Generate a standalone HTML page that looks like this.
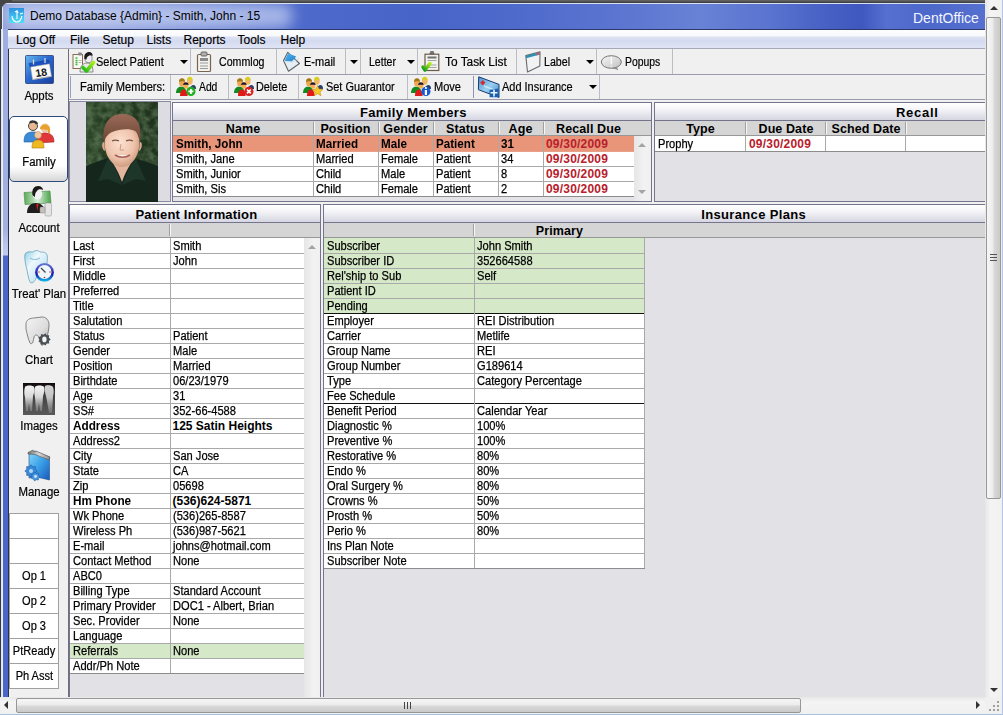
<!DOCTYPE html><html><head><meta charset="utf-8"><title>DentOffice</title><style>
*{box-sizing:border-box;margin:0;padding:0}
html,body{width:1003px;height:715px;overflow:hidden;background:#f0f0f0;font-family:"Liberation Sans",sans-serif;font-size:11px;color:#000;position:relative}
.a{position:absolute}
.t{position:absolute;white-space:nowrap;line-height:13px}
#topband{left:0;top:0;width:985px;height:3px;background:linear-gradient(#6a6a6a,#3a3a3a)}
#title{left:2px;top:3px;width:983px;height:27px;background:linear-gradient(90deg,#93a3dc 0%,#8e9fdc 10%,#6a82d4 22%,#4e6acb 30%,#4764c8 42%,#4e6acb 52%,#5a74d0 62%,#6882d6 71%,#5a74d0 78%,#4660c4 84%,#3e58c0 87.5%,#5670d0 90%,#4c68ca 94%,#5670d0 100%);border-radius:6px 0 0 0;overflow:hidden}
#title .hl{position:absolute;left:0;top:0;width:100%;height:1px;background:#d8e0f8}#title .hl2{position:absolute;left:0;top:0;width:1px;height:100%;background:#e4eafa}
#title .glow{position:absolute;left:6px;top:1px;width:285px;height:24px;border-radius:12px;background:rgba(220,228,250,.6);filter:blur(7px)}
#lframe{left:0;top:29px;width:9px;height:668px;background:linear-gradient(90deg,#3a3a3a 0,#3a3a3a 1.5px,#dde4f8 1.5px,#dde4f8 2.5px,transparent 2.5px,transparent 8px,#2a3050 8px,#2a3050 9px,#f0f0f0 9px)}#lframe .fill{position:absolute;left:2.5px;top:0;width:5.5px;height:100%;background:linear-gradient(#9eaee2 0,#a2b0e2 200px,#b8c4ec 215px,#c0cbee 226px,#4a66c8 227px,#4a66c8 100%)}
#menubar{left:8px;top:29px;width:977px;height:20px;background:linear-gradient(#fdfdfe 0%,#f8f9fc 34%,#dde2f2 38%,#d4daef 60%,#dfe3f5 100%);border-top:1px solid #2a3a6a;border-bottom:1px solid #a6a9b6}
#menubar span{position:absolute;top:3px;font-size:12px;line-height:14px;color:#000;white-space:nowrap;-webkit-text-stroke:.15px #000}
.tb{background:#f0f0f0;border-bottom:1px solid #9a9cae}
.sep{position:absolute;width:1px;background:#bcbcc6}
.tbt{position:absolute;font-size:12px;line-height:13px;white-space:nowrap;color:#000;transform:scaleX(.915);transform-origin:0 0;-webkit-text-stroke:.2px #000}
.s{transform:scaleX(.925);transform-origin:0 0;-webkit-text-stroke:.25px #000}
.dd{position:absolute;width:0;height:0;border-left:4px solid transparent;border-right:4px solid transparent;border-top:4px solid #000}
.panel{position:absolute;border:1px solid #76768e;background:#e2e2e6}
.ptitle{position:absolute;left:0;top:0;right:0;height:17px;background:linear-gradient(#fefefe 0%,#f0f0f4 40%,#d6d6e2 100%);border-bottom:1px solid #76768e;font-weight:bold;font-size:13px;line-height:17px;text-align:center;color:#111}
.hdr{position:absolute;background:#d6d6d6;border-bottom:1px solid #9a9a9a}
.hdr span{position:absolute;top:0;font-weight:bold;font-size:11.5px;line-height:14px;text-align:center;color:#111}
.hsep{position:absolute;top:3px;width:1px;height:11px;background:#a0a0a0;border-right:1px solid #f4f4f4}
.row{position:absolute;background:#fff;border-bottom:1px solid #a8a8a8}
.row span{position:absolute;top:1px;line-height:13px;font-size:11px;white-space:nowrap;color:#111}
.vline{position:absolute;width:1px;background:#a8a8a8}
.navl{position:absolute;font-size:12px;line-height:13px;white-space:nowrap;color:#000;text-align:center;transform:scaleX(.95);transform-origin:50% 0;-webkit-text-stroke:.2px #000}
.obox{position:absolute;left:9px;width:50px;height:26px;background:#fff;border:1px solid #a0a0a0;font-size:12px;line-height:24px;text-align:center;color:#111}.obox span{display:inline-block;transform:scaleX(.92);-webkit-text-stroke:.2px #000;color:#000}
.red{color:#c42b2b!important;font-weight:bold}
.b{font-weight:bold}
</style></head><body>
<div id="topband" class="a"></div>
<div class="a" style="left:0;top:0;width:12px;height:30px;background:#454545"></div>
<div id="title" class="a"><div class="glow"></div><div class="hl"></div><div class="hl2"></div></div>
<div id="lframe" class="a"><div class="fill"></div></div>
<svg class="a" style="left:9px;top:8px" width="16" height="16" viewBox="0 0 16 16"><defs><linearGradient id="ai" x1="0" y1="0" x2="0" y2="1"><stop offset="0" stop-color="#2a90e0"/><stop offset="1" stop-color="#50e0f8"/></linearGradient></defs><rect width="15" height="15" fill="url(#ai)"/><path d="M8 2v9M6 4c1-1 3-1 3 1M3 8c0 4 3 6 5 6s4-2 5-6M11 6l3-1" stroke="#fff" stroke-width="1.1" fill="none"/></svg>
<div class="t" style="left:30px;top:8.5px;font-size:12px;line-height:14px;color:#000">Demo Database {Admin} - Smith, John - 15</div>
<div class="t" style="left:913px;top:10px;font-size:14px;line-height:16px;color:#f4f6ff">DentOffice</div>
<div id="menubar" class="a">
<span style="left:8px">Log Off</span>
<span style="left:62px">File</span>
<span style="left:94.5px">Setup</span>
<span style="left:138.5px">Lists</span>
<span style="left:175.5px">Reports</span>
<span style="left:229.5px">Tools</span>
<span style="left:272.5px">Help</span>
</div>
<div class="a" style="left:68px;top:49px;width:1px;height:648px;background:#6e6e80"></div>
<div class="a tb" style="left:69px;top:49px;width:916px;height:26px"></div>
<div class="a tb" style="left:69px;top:75px;width:916px;height:25px"></div>
<div class="sep" style="left:190px;top:49px;height:25px"></div>
<div class="sep" style="left:276px;top:49px;height:25px"></div>
<div class="sep" style="left:345px;top:49px;height:25px"></div>
<div class="sep" style="left:360px;top:49px;height:25px"></div>
<div class="sep" style="left:417px;top:49px;height:25px"></div>
<div class="sep" style="left:516px;top:49px;height:25px"></div>
<div class="sep" style="left:596px;top:49px;height:25px"></div>
<div class="sep" style="left:672px;top:49px;height:25px"></div>
<div class="sep" style="left:170px;top:75px;height:24px"></div>
<div class="sep" style="left:228px;top:75px;height:24px"></div>
<div class="sep" style="left:298px;top:75px;height:24px"></div>
<div class="sep" style="left:407px;top:75px;height:24px"></div>
<div class="sep" style="left:599px;top:75px;height:24px"></div>
<div class="a" style="left:70px;top:76px;width:1px;height:22px;background:#9aa0c4"></div>
<div class="a" style="left:473px;top:76px;width:1px;height:22px;background:#8d93b4"></div>
<div class="tbt" style="left:96px;top:56px;transform:scaleX(0.915)">Select Patient</div>
<div class="tbt" style="left:218.5px;top:56px;transform:scaleX(0.885)">Commlog</div>
<div class="tbt" style="left:304.3px;top:56px;transform:scaleX(0.92)">E-mail</div>
<div class="tbt" style="left:368.5px;top:56px;transform:scaleX(0.88)">Letter</div>
<div class="tbt" style="left:444.6px;top:56px;transform:scaleX(0.99)">To Task List</div>
<div class="tbt" style="left:544.4px;top:56px;transform:scaleX(0.885)">Label</div>
<div class="tbt" style="left:624.8px;top:56px;transform:scaleX(0.865)">Popups</div>
<div class="tbt" style="left:79.5px;top:81px;transform:scaleX(0.926)">Family Members:</div>
<div class="tbt" style="left:199.2px;top:81px;transform:scaleX(0.86)">Add</div>
<div class="tbt" style="left:256.3px;top:81px;transform:scaleX(0.9)">Delete</div>
<div class="tbt" style="left:326.3px;top:81px;transform:scaleX(0.91)">Set Guarantor</div>
<div class="tbt" style="left:434px;top:81px;transform:scaleX(0.92)">Move</div>
<div class="tbt" style="left:502.4px;top:81px;transform:scaleX(0.913)">Add Insurance</div>
<div class="dd" style="left:179.5px;top:60px"></div>
<div class="dd" style="left:350px;top:60px"></div>
<div class="dd" style="left:407px;top:60px"></div>
<div class="dd" style="left:585.5px;top:60px"></div>
<div class="dd" style="left:588.5px;top:85px"></div>
<svg class="a" style="left:70px;top:48px" width="26" height="26" viewBox="0 0 26 26">
<defs><linearGradient id="spchk" x1="0" y1="1" x2="1" y2="0"><stop offset="0" stop-color="#18b818"/><stop offset="1" stop-color="#a8f010"/></linearGradient></defs>
<rect x="3" y="6.5" width="9.5" height="14" fill="#f8f8f4" stroke="#8a6a50" stroke-width="1"/><rect x="8" y="4.5" width="4" height="3" rx="1" fill="#888"/>
<path d="M5.5 10h2M5.5 12.5h2M5.5 14.5h2M5.5 16.5h2" stroke="#38c038" stroke-width="1.3"/><path d="M8.5 12.5h3M8.5 14.5h3" stroke="#aaa" stroke-width=".8"/>
<path d="M10 24c0-6 3-9 7-9s6 3 6 9z" fill="#e8e8ec" stroke="#777" stroke-width=".8"/>
<ellipse cx="18.5" cy="10.5" rx="3.6" ry="4.2" fill="#ececf0" stroke="#555" stroke-width=".6"/>
<path d="M14.5 11c-1-5 2-7 4.5-7s4 2 3.5 4c-1-1-3-1-4 0-1 .5-2 1.5-2 3.5z" fill="#1a1a1a"/>
<path d="M13 19.5l3.5 3.5 7-8.5" stroke="url(#spchk)" stroke-width="3.6" fill="none" stroke-linecap="round" stroke-linejoin="round"/>
</svg>
<svg class="a" style="left:196px;top:51px" width="18" height="22" viewBox="0 0 18 22">
<rect x="1.5" y="3.5" width="13" height="17" rx="1" fill="#f2f2ee" stroke="#7a6450" stroke-width="1.2"/><rect x="5" y="1" width="6" height="4" rx="1" fill="#b0b0b0" stroke="#666"/>
<rect x="4" y="7" width="8" height="3" fill="#8a8a8a"/><path d="M4 12h8M4 15h8M4 17.5h8" stroke="#999"/></svg>
<svg class="a" style="left:278px;top:49px" width="26" height="26" viewBox="0 0 26 26">
<defs><linearGradient id="emb" x1="0" y1="0" x2="1" y2="1"><stop offset="0" stop-color="#5ab8f0"/><stop offset="1" stop-color="#1a80d0"/></linearGradient></defs>
<path d="M9.8 3.3L21.5 14.5 10.5 22.2 5.5 11.6z" fill="#e4eef4" stroke="#606468" stroke-width="1.1" stroke-linejoin="round"/>
<path d="M10 4.2L18.2 7.6 13.8 12.4 6.6 11.8z" fill="url(#emb)"/>
<path d="M6.5 12.5l7.5 .5 7-3.5" stroke="#c8d8e4" stroke-width=".8" fill="none"/>
</svg>
<svg class="a" style="left:415px;top:49px" width="26" height="26" viewBox="0 0 26 26">
<defs><linearGradient id="tkchk" x1="0" y1="1" x2="1" y2="0"><stop offset="0" stop-color="#109818"/><stop offset="1" stop-color="#b0f010"/></linearGradient></defs>
<rect x="10" y="5.2" width="13.8" height="16.3" fill="#f2f2f0" stroke="#6a5a48" stroke-width="1.2"/><path d="M15 5l.5-2.5h3l.5 2.5z" fill="#777" stroke="#555" stroke-width=".6"/>
<rect x="12.5" y="7.5" width="9" height="2" fill="#707070"/><path d="M12.5 11.5h9M12.5 16h9M12.5 18.5h9" stroke="#9a9a9a" stroke-width=".9"/>
<path d="M8 18l2 3 5-6.5" stroke="url(#tkchk)" stroke-width="3.4" fill="none" stroke-linecap="round" stroke-linejoin="round"/>
</svg>
<svg class="a" style="left:518px;top:49px" width="26" height="26" viewBox="0 0 26 26">
<path d="M7.8 6.6L22 2.8 21.8 16.9 9.5 23z" fill="#f0f2f4" stroke="#6a6a6a" stroke-width="1.1" stroke-linejoin="round"/>
<path d="M8 6.7L22 2.9v2.6L8.1 9.3z" fill="#2a90b0"/><path d="M18.5 3.8L22 2.9v2.6l-3.5 1z" fill="#b06078"/>
</svg>
<svg class="a" style="left:596px;top:49px" width="26" height="26" viewBox="0 0 26 26">
<defs><linearGradient id="pug" x1="0" y1="0" x2="1" y2="1"><stop offset="0" stop-color="#f8f8f8"/><stop offset=".5" stop-color="#dcdcdc"/><stop offset="1" stop-color="#c0c0c0"/></linearGradient></defs>
<path d="M19 18l3 2.5-5-1.5z" fill="#bbb" stroke="#666" stroke-width=".6"/>
<ellipse cx="15.3" cy="13" rx="10" ry="6.3" fill="url(#pug)" stroke="#6a6a6a" stroke-width=".9"/>
<path d="M15.3 8v7.5M15.3 17v1" stroke="#fafafa" stroke-width="1.5"/>
</svg>
<svg class="a" style="left:172px;top:75px" width="26" height="25" viewBox="0 0 26 25">
<path d="M18 14c0-3 2-4 3.5-4s2.5 1 2.5 4z" fill="#28406a"/>
<ellipse cx="17.8" cy="6" rx="2.9" ry="3.8" fill="#f0b860"/><path d="M15 5.5c0-3 1.5-3.8 2.8-3.8s2.8 .8 2.8 3.8c-1-1-4-1-5.6 0z" fill="#d8d020"/>
<path d="M4 18c0-4 2-6.3 4.5-6.3h2c2.5 0 3.5 2 3.5 6.3z" fill="#138a20"/>
<ellipse cx="10" cy="7.5" rx="3" ry="4" fill="#f0a850"/><path d="M7 7c0-3 1.5-3.8 3-3.8s3 .8 3 3.8c-1-1-4.5-1-6 0z" fill="#a07818"/>
<path d="M8 21c0-4 1.5-6.5 3.8-6.5s3.8 2.5 3.8 6.5z" fill="#e01818"/>
<ellipse cx="13.9" cy="11" rx="2.5" ry="2.6" fill="#f4b050"/><path d="M11.2 10c0-2 1.2-2.8 2.7-2.8s2.7 .8 2.7 2.8c-1-.5-4.4-.5-5.4 0z" fill="#1a1830"/>
<circle cx="18.9" cy="16.4" r="4.6" fill="#20b020"/><path d="M16.4 16.4h5M18.9 13.9v5" stroke="#fff" stroke-width="1.8"/></svg>
<svg class="a" style="left:229.5px;top:75px" width="26" height="25" viewBox="0 0 26 25">
<path d="M18 14c0-3 2-4 3.5-4s2.5 1 2.5 4z" fill="#28406a"/>
<ellipse cx="17.8" cy="6" rx="2.9" ry="3.8" fill="#f0b860"/><path d="M15 5.5c0-3 1.5-3.8 2.8-3.8s2.8 .8 2.8 3.8c-1-1-4-1-5.6 0z" fill="#d8d020"/>
<path d="M4 18c0-4 2-6.3 4.5-6.3h2c2.5 0 3.5 2 3.5 6.3z" fill="#138a20"/>
<ellipse cx="10" cy="7.5" rx="3" ry="4" fill="#f0a850"/><path d="M7 7c0-3 1.5-3.8 3-3.8s3 .8 3 3.8c-1-1-4.5-1-6 0z" fill="#a07818"/>
<path d="M8 21c0-4 1.5-6.5 3.8-6.5s3.8 2.5 3.8 6.5z" fill="#e01818"/>
<ellipse cx="13.9" cy="11" rx="2.5" ry="2.6" fill="#f4b050"/><path d="M11.2 10c0-2 1.2-2.8 2.7-2.8s2.7 .8 2.7 2.8c-1-.5-4.4-.5-5.4 0z" fill="#1a1830"/>
<circle cx="18.9" cy="16.4" r="4.6" fill="#d82020"/><path d="M17 14.5l3.8 3.8M20.8 14.5l-3.8 3.8" stroke="#fff" stroke-width="1.7"/></svg>
<svg class="a" style="left:299px;top:75px" width="26" height="25" viewBox="0 0 26 25">
<path d="M18 14c0-3 2-4 3.5-4s2.5 1 2.5 4z" fill="#28406a"/>
<ellipse cx="17.8" cy="6" rx="2.9" ry="3.8" fill="#f0b860"/><path d="M15 5.5c0-3 1.5-3.8 2.8-3.8s2.8 .8 2.8 3.8c-1-1-4-1-5.6 0z" fill="#d8d020"/>
<path d="M4 18c0-4 2-6.3 4.5-6.3h2c2.5 0 3.5 2 3.5 6.3z" fill="#138a20"/>
<ellipse cx="10" cy="7.5" rx="3" ry="4" fill="#f0a850"/><path d="M7 7c0-3 1.5-3.8 3-3.8s3 .8 3 3.8c-1-1-4.5-1-6 0z" fill="#a07818"/>
<path d="M8 21c0-4 1.5-6.5 3.8-6.5s3.8 2.5 3.8 6.5z" fill="#e01818"/>
<ellipse cx="13.9" cy="11" rx="2.5" ry="2.6" fill="#f4b050"/><path d="M11.2 10c0-2 1.2-2.8 2.7-2.8s2.7 .8 2.7 2.8c-1-.5-4.4-.5-5.4 0z" fill="#1a1830"/>
<path d="M18.5 10.5l1.6 3.6 3.9.3-3 2.6 1 3.8-3.5-2.1-3.4 2.1 1-3.8-3-2.6 3.9-.3z" fill="#f8c828" stroke="#c08010" stroke-width=".5"/></svg>
<svg class="a" style="left:407px;top:75px" width="26" height="25" viewBox="0 0 26 25">
<path d="M18 14c0-3 2-4 3.5-4s2.5 1 2.5 4z" fill="#28406a"/>
<ellipse cx="17.8" cy="6" rx="2.9" ry="3.8" fill="#f0b860"/><path d="M15 5.5c0-3 1.5-3.8 2.8-3.8s2.8 .8 2.8 3.8c-1-1-4-1-5.6 0z" fill="#d8d020"/>
<path d="M4 18c0-4 2-6.3 4.5-6.3h2c2.5 0 3.5 2 3.5 6.3z" fill="#138a20"/>
<ellipse cx="10" cy="7.5" rx="3" ry="4" fill="#f0a850"/><path d="M7 7c0-3 1.5-3.8 3-3.8s3 .8 3 3.8c-1-1-4.5-1-6 0z" fill="#a07818"/>
<path d="M8 21c0-4 1.5-6.5 3.8-6.5s3.8 2.5 3.8 6.5z" fill="#e01818"/>
<ellipse cx="13.9" cy="11" rx="2.5" ry="2.6" fill="#f4b050"/><path d="M11.2 10c0-2 1.2-2.8 2.7-2.8s2.7 .8 2.7 2.8c-1-.5-4.4-.5-5.4 0z" fill="#1a1830"/>
<circle cx="18.9" cy="16.4" r="4.6" fill="#1a5ad0"/><path d="M18.9 15v5" stroke="#fff" stroke-width="2.2"/><circle cx="18.9" cy="13" r="1.1" fill="#fff"/></svg>
<svg class="a" style="left:470px;top:75px" width="32" height="25" viewBox="0 0 32 25">
<defs><linearGradient id="aig" x1="0" y1="0" x2="1" y2="1"><stop offset="0" stop-color="#4a90d0"/><stop offset=".5" stop-color="#9ad0f0"/><stop offset="1" stop-color="#3a80c8"/></linearGradient></defs>
<path d="M8.7 1.8L29 9.4V22.4L8.4 14.7z" fill="url(#aig)" stroke="#1a3a70" stroke-width="1" stroke-linejoin="round"/>
<path d="M10.5 7.7h4.5M12.7 5.5v4.5" stroke="#e02020" stroke-width="1.8"/>
<path d="M14 11l9 3.3" stroke="#c8e8f8" stroke-width="1.4"/>
<path d="M19.6 15l8.8-1.5v8.8h-8.8z" fill="#1a60b0"/><path d="M20.5 17.8h7M24 14.5v7" stroke="#e8f4ff" stroke-width="1.6"/>
</svg>
<div class="a" style="left:9px;top:116px;width:59px;height:66px;border:1px solid #2c4a7a;border-radius:5px;background:linear-gradient(#ffffff 0%,#ffffff 76%,#f4f4f4 84%,#d6d6d6 100%)"></div>
<svg class="a" style="left:25px;top:55px" width="29" height="29" viewBox="0 0 29 29">
<defs><linearGradient id="apg" x1="0" y1="0" x2="1" y2="1"><stop offset="0" stop-color="#68b8f0"/><stop offset=".45" stop-color="#2a6ad0"/><stop offset="1" stop-color="#1a3ea0"/></linearGradient></defs>
<rect x="0.5" y="0.5" width="28" height="28" rx="1" fill="url(#apg)" stroke="#28407a" stroke-width=".8"/>
<path d="M4 8.5l19.5-3.5 1.5 5-19.5 3.5z" fill="#1a50c0" stroke="#103890" stroke-width=".4"/>
<path d="M5.5 12l19-3.2 2 12.5-19 3.3z" fill="#fafafa" stroke="#909090" stroke-width=".5"/>
<path d="M7.5 24.6l19-3.3" stroke="#b8b8b8" stroke-width="1"/>
<text x="16" y="21.2" font-family="Liberation Sans" font-weight="bold" font-size="10.5" text-anchor="middle" transform="rotate(-9 16 17)" fill="#141414">18</text>
<path d="M8.5 4.5v5M20 3v5" stroke="#d8d8d8" stroke-width="1.3"/></svg>
<div class="navl" style="left:-1.5px;width:80px;top:90px">Appts</div>
<svg class="a" style="left:23px;top:120px" width="32" height="29" viewBox="0 0 32 29">
<circle cx="10" cy="6" r="4.5" fill="#e8b890" stroke="#444" stroke-width="1"/><path d="M7 3c1-2 6-2 7 1" stroke="#333" stroke-width="2.5" fill="none"/>
<path d="M1 22c0-8 3-10 9-10s7 2 7 6v4z" fill="#3a8ad8" stroke="#245a98" stroke-width=".6"/>
<circle cx="22" cy="8" r="4.5" fill="#f0c8a0"/><path d="M17 9c0-6 10-6 10 0v4h-2v-3" fill="#e8a030"/>
<path d="M14 23c0-8 3-10 8-10s9 2 9 9z" fill="#e03838" stroke="#a02020" stroke-width=".6"/>
<circle cx="15" cy="15" r="3.5" fill="#f0c8a0" stroke="#b08050" stroke-width=".5"/>
<path d="M9 28c0-6 2-8 6-8s6 2 6 8z" fill="#f0b820" stroke="#b08010" stroke-width=".6"/></svg>
<div class="navl" style="left:-1.5px;width:80px;top:156px">Family</div>
<svg class="a" style="left:23px;top:186px" width="30" height="31" viewBox="0 0 30 31">
<defs><linearGradient id="acn" x1="0" y1="0" x2="1" y2="0"><stop offset="0" stop-color="#58a858"/><stop offset=".5" stop-color="#d8f0d8"/><stop offset="1" stop-color="#48a048"/></linearGradient></defs>
<path d="M1 6.5l26-1.5 1 12-26 1.5z" fill="url(#acn)" stroke="#4a8a4a" stroke-width=".6"/>
<path d="M4 27c0-7 4-10 9-10s8 3 9 8l-1 2z" fill="#1e1e1e"/><path d="M13.2 18l1.2 7 1.2-7z" fill="#d02020"/>
<ellipse cx="14.5" cy="8" rx="4.6" ry="5.6" fill="#f2f2f2"/>
<path d="M9.5 9c-1-6 2-9 5.5-9 3 0 5 2 5 4-2-1-5-1-6 1-1 1-2 2-2 6-1-1-2-1-2.5-2z" fill="#1a1a1a"/>
<rect x="22" y="17" width="6.5" height="13" rx="1.5" fill="#e4e4e4" stroke="#999" stroke-width=".6"/>
<rect x="17" y="21" width="5" height="6" rx="1" fill="#c8c0b8" stroke="#888" stroke-width=".5"/></svg>
<div class="navl" style="left:-1.5px;width:80px;top:222px">Account</div>
<svg class="a" style="left:22px;top:250px" width="34" height="34" viewBox="0 0 34 34">
<defs><linearGradient id="tth" x1="0" y1="0" x2="1" y2="1"><stop offset="0" stop-color="#8cd0e8"/><stop offset=".35" stop-color="#eef8fc"/><stop offset=".7" stop-color="#c8e8f4"/><stop offset="1" stop-color="#9ac8d8"/></linearGradient>
<linearGradient id="clr" x1="0" y1="0" x2="0" y2="1"><stop offset="0" stop-color="#6a7ad8"/><stop offset=".6" stop-color="#1a1aa8"/><stop offset="1" stop-color="#10c8f0"/></linearGradient></defs>
<path d="M3 4c2-3 6-2 8-2 2-2 5-2 7 0 3 0 6 0 7 3 1 3 0 9-1 13-1 5-2 9-4 12-2 2-4-2-5-4-1 3-3 7-6 7-2-1-3-8-4-13-1-4-3-11-2-16z" fill="url(#tth)" stroke="#5a98b0" stroke-width=".7"/>
<path d="M8 8c3 2 6 2 10 0" stroke="#7ab8d0" stroke-width="1" fill="none"/>
<circle cx="22.5" cy="22.3" r="9.4" fill="url(#clr)"/><circle cx="22.5" cy="22" r="7" fill="#eef6fc"/>
<path d="M19 18l4.5 4.5" stroke="#444" stroke-width="1.2"/><circle cx="17" cy="22" r=".8" fill="#d04040"/><circle cx="28" cy="22" r=".8" fill="#d04040"/><circle cx="22.5" cy="27.5" r=".8" fill="#a03030"/></svg>
<div class="navl" style="left:-1.5px;width:80px;top:288px">Treat' Plan</div>
<svg class="a" style="left:24px;top:316px" width="28" height="32" viewBox="0 0 28 32">
<defs><linearGradient id="cth" x1="0" y1="0" x2="1" y2="1"><stop offset="0" stop-color="#f4f4f4"/><stop offset=".6" stop-color="#dcdcdc"/><stop offset="1" stop-color="#a8a8a8"/></linearGradient></defs>
<path d="M2 8c0-4 4-6 8-6 3 0 5-1 8-1 4 0 7 3 7 8 0 4-1 8-2 12l-4 8c-1 1-2 0-3-3-1-5-2-7-4-7s-2 3-3 7c-1 2-2 2-3 1-2-4-3-10-4-14z" fill="url(#cth)" stroke="#6a6a6a" stroke-width=".8"/>
<path d="M26.70,23.40 L24.91,25.04 L25.23,27.45 L22.80,27.56 L21.49,29.60 L19.57,28.13 L17.25,28.86 L16.72,26.49 L14.48,25.55 L15.60,23.40 L14.48,21.25 L16.72,20.31 L17.25,17.94 L19.57,18.67 L21.49,17.20 L22.80,19.24 L25.23,19.35 L24.91,21.76Z" fill="#4a5055"/><ellipse cx="20.4" cy="23.4" rx="2.2" ry="2.8" fill="#f4f4f4"/></svg>
<div class="navl" style="left:-1.5px;width:80px;top:354px">Chart</div>
<svg class="a" style="left:23px;top:383px" width="32" height="32" viewBox="0 0 32 32">
<defs><linearGradient id="xr" x1="0" y1="0" x2="0" y2="1"><stop offset="0" stop-color="#100808"/><stop offset=".35" stop-color="#404040"/><stop offset="1" stop-color="#5a5a5a"/></linearGradient>
<linearGradient id="xt" x1="0" y1="0" x2="0" y2="1"><stop offset="0" stop-color="#f4f4f4"/><stop offset=".45" stop-color="#d8d8d8"/><stop offset="1" stop-color="#8a8a8a" stop-opacity=".6"/></linearGradient></defs>
<rect width="32" height="32" fill="url(#xr)"/>
<path d="M2 4c1-2 8-2 9 0 1 3 0 6-1 9l-1 15h-2l-1-8-1 8h-2l-1-14c-1-3-1-7 0-10z" fill="url(#xt)"/>
<path d="M12 4c1-2 8-2 9 0 1 3 0 6-1 9l-1 15h-2l-1-8-1 8h-2l-1-14c-1-3-1-7 0-10z" fill="url(#xt)"/>
<path d="M22 3c1-1 7-1 8 1 1 3 1 6 0 9l-1 17h-3l-2-12-1-5c-1-3-2-7-1-10z" fill="url(#xt)" opacity=".85"/></svg>
<div class="navl" style="left:-1.5px;width:80px;top:420px">Images</div>
<svg class="a" style="left:23px;top:449px" width="32" height="33" viewBox="0 0 32 33">
<defs><linearGradient id="mg" x1="0" y1="0" x2="1" y2="1"><stop offset="0" stop-color="#8ad8fc"/><stop offset=".5" stop-color="#3aa0e8"/><stop offset="1" stop-color="#1a58b8"/></linearGradient>
<linearGradient id="mgl" x1="0" y1="0" x2="1" y2="0"><stop offset="0" stop-color="#707070"/><stop offset=".5" stop-color="#d8d8d8"/><stop offset="1" stop-color="#888"/></linearGradient></defs>
<path d="M6 4l6-2 1.5 1 13 5v23l-13-3-7.5 1z" fill="url(#mg)" stroke="#1a5090" stroke-width=".6"/>
<path d="M5 3.5l5-2.5 1 2 2-1 14 6-1 3-14-5.5-7-0.5z" fill="url(#mgl)" stroke="#555" stroke-width=".6"/>
<path d="M14.20,22.00 L12.25,23.76 L12.38,26.38 L9.76,26.25 L8.00,28.20 L6.24,26.25 L3.62,26.38 L3.75,23.76 L1.80,22.00 L3.75,20.24 L3.62,17.62 L6.24,17.75 L8.00,15.80 L9.76,17.75 L12.38,17.62 L12.25,20.24Z" fill="#3a88d8" stroke="#1a4a90" stroke-width=".5"/><circle cx="8" cy="22" r="2" fill="#a8d8f8"/>
<path d="M17.00,27.50 L15.47,28.93 L15.31,31.02 L13.23,30.72 L11.50,31.89 L10.44,30.08 L8.45,29.45 L9.20,27.50 L8.45,25.55 L10.44,24.92 L11.50,23.11 L13.23,24.28 L15.31,23.98 L15.47,26.07Z" fill="#4a98e0" stroke="#1a4a90" stroke-width=".5"/><circle cx="12.5" cy="27.5" r="1.4" fill="#c8e8fc"/></svg>
<div class="navl" style="left:-1.5px;width:80px;top:486px">Manage</div>
<div class="obox" style="top:513px"><span></span></div>
<div class="obox" style="top:538px"><span></span></div>
<div class="obox" style="top:563px"><span>Op 1</span></div>
<div class="obox" style="top:588px"><span>Op 2</span></div>
<div class="obox" style="top:613px"><span>Op 3</span></div>
<div class="obox" style="top:638px"><span>PtReady</span></div>
<div class="obox" style="top:663px"><span>Ph Asst</span></div>
<div class="a" style="left:69px;top:101px;width:102px;height:101px;border:1px solid #8a8aa0;background:#dcdce2"></div>
<svg class="a" style="left:86px;top:102px" width="72" height="100" viewBox="0 0 72 100">
<defs><filter id="fol" x="0" y="0" width="100%" height="100%"><feTurbulence type="fractalNoise" baseFrequency=".13" numOctaves="3" seed="11"/>
<feColorMatrix type="matrix" values="0 0 0 0 .16  0 0 0 0 .26  0 0 0 0 .14  0 0 0 -2.2 1.55"/></filter>
<linearGradient id="pbg" x1="0" y1="0" x2="1" y2="0"><stop offset="0" stop-color="#2a4226"/><stop offset=".5" stop-color="#243a20"/><stop offset="1" stop-color="#1e321c"/></linearGradient>
<radialGradient id="face" cx=".45" cy=".4" r=".65"><stop offset="0" stop-color="#fbe0d0"/><stop offset=".6" stop-color="#efc4ac"/><stop offset="1" stop-color="#c89478"/></radialGradient>
<linearGradient id="hair" x1="0" y1="0" x2="0" y2="1"><stop offset="0" stop-color="#9a6a58"/><stop offset="1" stop-color="#6a4434"/></linearGradient></defs>
<rect width="72" height="100" fill="url(#pbg)"/>
<rect width="72" height="100" fill="#6a8a58" filter="url(#fol)" opacity=".55"/>
<path d="M0 64c6-3 14-5 22-8l14 10 14-9c8 2 16 4 22 7v36h-72z" fill="#15271d"/>
<path d="M22 56l6 7 8 20-14-6-10 2z" fill="#1e362a"/><path d="M50 57l-6 7-8 19 14-6 10 2z" fill="#1e362a"/>
<path d="M24 56c3 6 8 12 12 24 4-12 9-18 12-24-2-6-4-8-12-8s-10 2-12 8z" fill="#e4b49c"/>
<path d="M18 40c-3 0-2 8 1 9zM54 40c3 0 2 8-1 9z" fill="#e0a890"/>
<path d="M18.5 40c0-10 6-16 17.5-16s17.5 6 17.5 16c0 14-8 25-17.5 25s-17.5-11-17.5-25z" fill="url(#face)"/>
<path d="M18 41c-3-19 6-29 18-29 12 0 21 7 18 28-2-7-3-10-5-11-4-2-10-2-16-1-6 1-10 3-12 6-2 2-2 4-3 7z" fill="url(#hair)"/>
<path d="M26 39c2-1 5-1 7 0M40 39c2-1 5-1 7 0" stroke="#7a5040" stroke-width="1.3" fill="none"/>
<path d="M35 42l-1 6h4" stroke="#d09a84" stroke-width="1" fill="none"/>
<path d="M29 53c4 3 11 3 15 0" stroke="#a86058" stroke-width="1.6" fill="#f8f0ea"/>
</svg>
<div class="a" style="left:172px;top:102px;width:480px;height:100px;border:1px solid #74748c;border-left-width:1px;background:#e4e4e8"></div>
<div class="a" style="left:173px;top:103px;width:478px;height:18px;background:linear-gradient(#ffffff 0%,#f6f6f9 35%,#e4e4ec 70%,#d6d6e2 100%);border-bottom:1px solid #74748c"></div>
<div class="t" style="left:313.4px;width:200px;top:105px;text-align:center;font-weight:bold;font-size:13px;line-height:15px;letter-spacing:0.36px">Family Members</div>
<div class="a" style="left:173px;top:121px;width:478px;height:15px;background:#d5d5d5;border-bottom:1px solid #979797"></div>
<div class="t" style="left:173px;width:140px;top:122.5px;text-align:center;font-weight:bold;font-size:12.5px;letter-spacing:0.1px">Name</div>
<div class="t" style="left:313px;width:65px;top:122.5px;text-align:center;font-weight:bold;font-size:12.5px;letter-spacing:0.1px">Position</div>
<div class="t" style="left:378px;width:55px;top:122.5px;text-align:center;font-weight:bold;font-size:12.5px;letter-spacing:0.1px">Gender</div>
<div class="t" style="left:433px;width:65px;top:122.5px;text-align:center;font-weight:bold;font-size:12.5px;letter-spacing:0.1px">Status</div>
<div class="t" style="left:498px;width:45px;top:122.5px;text-align:center;font-weight:bold;font-size:12.5px;letter-spacing:0.1px">Age</div>
<div class="t" style="left:543px;width:91px;top:122.5px;text-align:center;font-weight:bold;font-size:12.5px;letter-spacing:0.1px">Recall Due</div>
<div class="a" style="left:313px;top:122px;width:2px;height:12px;border-left:1px solid #a0a0a0;border-right:1px solid #f8f8f8"></div>
<div class="a" style="left:378px;top:122px;width:2px;height:12px;border-left:1px solid #a0a0a0;border-right:1px solid #f8f8f8"></div>
<div class="a" style="left:433px;top:122px;width:2px;height:12px;border-left:1px solid #a0a0a0;border-right:1px solid #f8f8f8"></div>
<div class="a" style="left:498px;top:122px;width:2px;height:12px;border-left:1px solid #a0a0a0;border-right:1px solid #f8f8f8"></div>
<div class="a" style="left:543px;top:122px;width:2px;height:12px;border-left:1px solid #a0a0a0;border-right:1px solid #f8f8f8"></div>
<div class="a" style="left:173px;top:136px;width:461px;height:60px;background:#fff"></div>
<div class="a" style="left:173px;top:136px;width:461px;height:15px;background:#e8957a"></div>
<div class="a" style="left:173px;top:151px;width:461px;height:1px;background:#a9a9a9"></div>
<div class="a" style="left:173px;top:166px;width:461px;height:1px;background:#a9a9a9"></div>
<div class="a" style="left:173px;top:181px;width:461px;height:1px;background:#a9a9a9"></div>
<div class="a" style="left:173px;top:151px;width:461px;height:1px;background:#e8a088"></div>
<div class="a" style="left:173px;top:196px;width:461px;height:1px;background:#8c8c8c"></div>
<div class="a" style="left:313px;top:136px;width:1px;height:60px;background:#a9a9a9"></div>
<div class="a" style="left:378px;top:136px;width:1px;height:60px;background:#a9a9a9"></div>
<div class="a" style="left:433px;top:136px;width:1px;height:60px;background:#a9a9a9"></div>
<div class="a" style="left:498px;top:136px;width:1px;height:60px;background:#a9a9a9"></div>
<div class="a" style="left:543px;top:136px;width:1px;height:60px;background:#a9a9a9"></div>
<div class="t" style="left:176px;top:138px;font-size:12px;font-weight:bold;transform:scaleX(0.97);transform-origin:0 0;">Smith, John</div>
<div class="t" style="left:316px;top:138px;font-size:12px;font-weight:bold;transform:scaleX(0.97);transform-origin:0 0;">Married</div>
<div class="t" style="left:381px;top:138px;font-size:12px;font-weight:bold;transform:scaleX(0.97);transform-origin:0 0;">Male</div>
<div class="t" style="left:436px;top:138px;font-size:12px;font-weight:bold;transform:scaleX(0.97);transform-origin:0 0;">Patient</div>
<div class="t" style="left:501px;top:138px;font-size:12px;font-weight:bold;transform:scaleX(0.97);transform-origin:0 0;">31</div>
<div class="t" style="left:546px;top:138px;color:#b8202c;font-weight:bold;font-size:12px;letter-spacing:.2px">09/30/2009</div>
<div class="t s" style="left:176px;top:153px;font-size:12px">Smith, Jane</div>
<div class="t s" style="left:316px;top:153px;font-size:12px">Married</div>
<div class="t s" style="left:381px;top:153px;font-size:12px">Female</div>
<div class="t s" style="left:436px;top:153px;font-size:12px">Patient</div>
<div class="t s" style="left:501px;top:153px;font-size:12px">34</div>
<div class="t" style="left:546px;top:153px;color:#b8202c;font-weight:bold;font-size:12px;letter-spacing:.2px">09/30/2009</div>
<div class="t s" style="left:176px;top:168px;font-size:12px">Smith, Junior</div>
<div class="t s" style="left:316px;top:168px;font-size:12px">Child</div>
<div class="t s" style="left:381px;top:168px;font-size:12px">Male</div>
<div class="t s" style="left:436px;top:168px;font-size:12px">Patient</div>
<div class="t s" style="left:501px;top:168px;font-size:12px">8</div>
<div class="t" style="left:546px;top:168px;color:#b8202c;font-weight:bold;font-size:12px;letter-spacing:.2px">09/30/2009</div>
<div class="t s" style="left:176px;top:183px;font-size:12px">Smith, Sis</div>
<div class="t s" style="left:316px;top:183px;font-size:12px">Child</div>
<div class="t s" style="left:381px;top:183px;font-size:12px">Female</div>
<div class="t s" style="left:436px;top:183px;font-size:12px">Patient</div>
<div class="t s" style="left:501px;top:183px;font-size:12px">2</div>
<div class="t" style="left:546px;top:183px;color:#b8202c;font-weight:bold;font-size:12px;letter-spacing:.2px">09/30/2009</div>
<div class="a" style="left:634px;top:136px;width:17px;height:65px;background:linear-gradient(90deg,#e6e6e6,#f2f2f2 60%,#f0f0f0)"></div>
<div class="a" style="left:638px;top:143px;width:0;height:0;border-left:4px solid transparent;border-right:4px solid transparent;border-bottom:4px solid #a4a4a4"></div>
<div class="a" style="left:638px;top:190px;width:0;height:0;border-left:4px solid transparent;border-right:4px solid transparent;border-top:4px solid #a4a4a4"></div>
<div class="a" style="left:654px;top:102px;width:700px;height:100px;border:1px solid #74748c;border-left-width:1px;background:#e2e2e6"></div>
<div class="a" style="left:655px;top:103px;width:698px;height:18px;background:linear-gradient(#ffffff 0%,#f6f6f9 35%,#e4e4ec 70%,#d6d6e2 100%);border-bottom:1px solid #74748c"></div>
<div class="t" style="left:817.3px;width:200px;top:105px;text-align:center;font-weight:bold;font-size:13px;line-height:15px;letter-spacing:0.7px">Recall</div>
<div class="a" style="left:655px;top:121px;width:698px;height:15px;background:#d5d5d5;border-bottom:1px solid #979797"></div>
<div class="t" style="left:655px;width:91px;top:122.5px;text-align:center;font-weight:bold;font-size:12.5px;letter-spacing:0.1px">Type</div>
<div class="t" style="left:746px;width:80px;top:122.5px;text-align:center;font-weight:bold;font-size:12.5px;letter-spacing:0.1px">Due Date</div>
<div class="t" style="left:826px;width:80px;top:122.5px;text-align:center;font-weight:bold;font-size:12.5px;letter-spacing:0.1px">Sched Date</div>
<div class="a" style="left:745px;top:122px;width:2px;height:12px;border-left:1px solid #a0a0a0;border-right:1px solid #f8f8f8"></div>
<div class="a" style="left:825px;top:122px;width:2px;height:12px;border-left:1px solid #a0a0a0;border-right:1px solid #f8f8f8"></div>
<div class="a" style="left:905px;top:122px;width:2px;height:12px;border-left:1px solid #a0a0a0;border-right:1px solid #f8f8f8"></div>
<div class="a" style="left:655px;top:136px;width:330px;height:15px;background:#fff"></div>
<div class="a" style="left:655px;top:151px;width:330px;height:1px;background:#8c8c8c"></div>
<div class="a" style="left:745px;top:136px;width:1px;height:15px;background:#a9a9a9"></div>
<div class="a" style="left:825px;top:136px;width:1px;height:15px;background:#a9a9a9"></div>
<div class="a" style="left:905px;top:136px;width:1px;height:15px;background:#a9a9a9"></div>
<div class="t s" style="left:658px;top:138px;font-size:12px">Prophy</div>
<div class="t" style="left:749px;top:138px;color:#b8202c;font-weight:bold;font-size:12px;letter-spacing:.2px">09/30/2009</div>
<div class="a" style="left:69px;top:204px;width:252px;height:500px;border:1px solid #74748c;border-left-width:1px;background:#e2e2e6"></div>
<div class="a" style="left:70px;top:205px;width:250px;height:18px;background:linear-gradient(#ffffff 0%,#f6f6f9 35%,#e4e4ec 70%,#d6d6e2 100%);border-bottom:1px solid #74748c"></div>
<div class="t" style="left:96.4px;width:200px;top:207px;text-align:center;font-weight:bold;font-size:13px;line-height:15px;letter-spacing:0.18px">Patient Information</div>
<div class="a" style="left:70px;top:223px;width:250px;height:15px;background:#d5d5d5;border-bottom:1px solid #979797"></div>
<div class="a" style="left:169px;top:224px;width:2px;height:12px;border-left:1px solid #a0a0a0;border-right:1px solid #f8f8f8"></div>
<div class="a" style="left:70px;top:238px;width:234px;height:435px;background:#fff"></div>
<div class="a" style="left:70px;top:643px;width:234px;height:15px;background:#d5e8c7"></div>
<div class="a" style="left:70px;top:253px;width:234px;height:1px;background:#a9a9a9"></div>
<div class="t s" style="left:73px;top:240px;font-size:12px">Last</div>
<div class="t s" style="left:172.5px;top:240px;font-size:12px">Smith</div>
<div class="a" style="left:70px;top:268px;width:234px;height:1px;background:#a9a9a9"></div>
<div class="t s" style="left:73px;top:255px;font-size:12px">First</div>
<div class="t s" style="left:172.5px;top:255px;font-size:12px">John</div>
<div class="a" style="left:70px;top:283px;width:234px;height:1px;background:#a9a9a9"></div>
<div class="t s" style="left:73px;top:270px;font-size:12px">Middle</div>
<div class="a" style="left:70px;top:298px;width:234px;height:1px;background:#a9a9a9"></div>
<div class="t s" style="left:73px;top:285px;font-size:12px">Preferred</div>
<div class="a" style="left:70px;top:313px;width:234px;height:1px;background:#a9a9a9"></div>
<div class="t s" style="left:73px;top:300px;font-size:12px">Title</div>
<div class="a" style="left:70px;top:328px;width:234px;height:1px;background:#a9a9a9"></div>
<div class="t s" style="left:73px;top:315px;font-size:12px">Salutation</div>
<div class="a" style="left:70px;top:343px;width:234px;height:1px;background:#a9a9a9"></div>
<div class="t s" style="left:73px;top:330px;font-size:12px">Status</div>
<div class="t s" style="left:172.5px;top:330px;font-size:12px">Patient</div>
<div class="a" style="left:70px;top:358px;width:234px;height:1px;background:#a9a9a9"></div>
<div class="t s" style="left:73px;top:345px;font-size:12px">Gender</div>
<div class="t s" style="left:172.5px;top:345px;font-size:12px">Male</div>
<div class="a" style="left:70px;top:373px;width:234px;height:1px;background:#a9a9a9"></div>
<div class="t s" style="left:73px;top:360px;font-size:12px">Position</div>
<div class="t s" style="left:172.5px;top:360px;font-size:12px">Married</div>
<div class="a" style="left:70px;top:388px;width:234px;height:1px;background:#a9a9a9"></div>
<div class="t s" style="left:73px;top:375px;font-size:12px">Birthdate</div>
<div class="t s" style="left:172.5px;top:375px;font-size:12px">06/23/1979</div>
<div class="a" style="left:70px;top:403px;width:234px;height:1px;background:#a9a9a9"></div>
<div class="t s" style="left:73px;top:390px;font-size:12px">Age</div>
<div class="t s" style="left:172.5px;top:390px;font-size:12px">31</div>
<div class="a" style="left:70px;top:418px;width:234px;height:1px;background:#a9a9a9"></div>
<div class="t s" style="left:73px;top:405px;font-size:12px">SS#</div>
<div class="t s" style="left:172.5px;top:405px;font-size:12px">352-66-4588</div>
<div class="a" style="left:70px;top:433px;width:234px;height:1px;background:#a9a9a9"></div>
<div class="t" style="left:72.5px;top:420px;font-size:12px;font-weight:bold;transform:scaleX(0.98);transform-origin:0 0;">Address</div>
<div class="t" style="left:172.5px;top:420px;font-size:12px;font-weight:bold;transform:scaleX(1.0);transform-origin:0 0;">125 Satin Heights</div>
<div class="a" style="left:70px;top:448px;width:234px;height:1px;background:#a9a9a9"></div>
<div class="t s" style="left:73px;top:435px;font-size:12px">Address2</div>
<div class="a" style="left:70px;top:463px;width:234px;height:1px;background:#a9a9a9"></div>
<div class="t s" style="left:73px;top:450px;font-size:12px">City</div>
<div class="t s" style="left:172.5px;top:450px;font-size:12px">San Jose</div>
<div class="a" style="left:70px;top:478px;width:234px;height:1px;background:#a9a9a9"></div>
<div class="t s" style="left:73px;top:465px;font-size:12px">State</div>
<div class="t s" style="left:172.5px;top:465px;font-size:12px">CA</div>
<div class="a" style="left:70px;top:493px;width:234px;height:1px;background:#a9a9a9"></div>
<div class="t s" style="left:73px;top:480px;font-size:12px">Zip</div>
<div class="t s" style="left:172.5px;top:480px;font-size:12px">05698</div>
<div class="a" style="left:70px;top:508px;width:234px;height:1px;background:#a9a9a9"></div>
<div class="t" style="left:72.5px;top:495px;font-size:12px;font-weight:bold;transform:scaleX(0.98);transform-origin:0 0;">Hm Phone</div>
<div class="t" style="left:172.5px;top:495px;font-size:12px;font-weight:bold;transform:scaleX(1.0);transform-origin:0 0;">(536)624-5871</div>
<div class="a" style="left:70px;top:523px;width:234px;height:1px;background:#a9a9a9"></div>
<div class="t s" style="left:73px;top:510px;font-size:12px">Wk Phone</div>
<div class="t s" style="left:172.5px;top:510px;font-size:12px">(536)265-8587</div>
<div class="a" style="left:70px;top:538px;width:234px;height:1px;background:#a9a9a9"></div>
<div class="t s" style="left:73px;top:525px;font-size:12px">Wireless Ph</div>
<div class="t s" style="left:172.5px;top:525px;font-size:12px">(536)987-5621</div>
<div class="a" style="left:70px;top:553px;width:234px;height:1px;background:#a9a9a9"></div>
<div class="t s" style="left:73px;top:540px;font-size:12px">E-mail</div>
<div class="t s" style="left:172.5px;top:540px;font-size:12px">johns@hotmail.com</div>
<div class="a" style="left:70px;top:568px;width:234px;height:1px;background:#a9a9a9"></div>
<div class="t s" style="left:73px;top:555px;font-size:12px">Contact Method</div>
<div class="t s" style="left:172.5px;top:555px;font-size:12px">None</div>
<div class="a" style="left:70px;top:583px;width:234px;height:1px;background:#a9a9a9"></div>
<div class="t s" style="left:73px;top:570px;font-size:12px">ABC0</div>
<div class="a" style="left:70px;top:598px;width:234px;height:1px;background:#a9a9a9"></div>
<div class="t s" style="left:73px;top:585px;font-size:12px">Billing Type</div>
<div class="t s" style="left:172.5px;top:585px;font-size:12px">Standard Account</div>
<div class="a" style="left:70px;top:613px;width:234px;height:1px;background:#a9a9a9"></div>
<div class="t s" style="left:73px;top:600px;font-size:12px">Primary Provider</div>
<div class="t s" style="left:172.5px;top:600px;font-size:12px">DOC1 - Albert, Brian</div>
<div class="a" style="left:70px;top:628px;width:234px;height:1px;background:#a9a9a9"></div>
<div class="t s" style="left:73px;top:615px;font-size:12px">Sec. Provider</div>
<div class="t s" style="left:172.5px;top:615px;font-size:12px">None</div>
<div class="a" style="left:70px;top:643px;width:234px;height:1px;background:#a9a9a9"></div>
<div class="t s" style="left:73px;top:630px;font-size:12px">Language</div>
<div class="a" style="left:70px;top:658px;width:234px;height:1px;background:#a9a9a9"></div>
<div class="t s" style="left:73px;top:645px;font-size:12px">Referrals</div>
<div class="t s" style="left:172.5px;top:645px;font-size:12px">None</div>
<div class="a" style="left:70px;top:673px;width:234px;height:1px;background:#8c8c8c"></div>
<div class="t s" style="left:73px;top:660px;font-size:12px">Addr/Ph Note</div>
<div class="a" style="left:170px;top:238px;width:1px;height:435px;background:#a9a9a9"></div>
<div class="a" style="left:304px;top:238px;width:16px;height:459px;background:linear-gradient(90deg,#e6e6e6,#f2f2f2 60%,#f0f0f0)"></div>
<div class="a" style="left:308px;top:245px;width:0;height:0;border-left:4px solid transparent;border-right:4px solid transparent;border-bottom:4px solid #a4a4a4"></div>
<div class="a" style="left:323px;top:204px;width:900px;height:500px;border:1px solid #74748c;border-left-width:1px;background:#e2e2e6"></div>
<div class="a" style="left:324px;top:205px;width:898px;height:18px;background:linear-gradient(#ffffff 0%,#f6f6f9 35%,#e4e4ec 70%,#d6d6e2 100%);border-bottom:1px solid #74748c"></div>
<div class="t" style="left:653.7px;width:200px;top:207px;text-align:center;font-weight:bold;font-size:13px;line-height:15px;letter-spacing:0.35px">Insurance Plans</div>
<div class="a" style="left:324px;top:223px;width:898px;height:15px;background:#d5d5d5;border-bottom:1px solid #979797"></div>
<div class="a" style="left:473px;top:224px;width:2px;height:12px;border-left:1px solid #a0a0a0;border-right:1px solid #f8f8f8"></div>
<div class="t" style="left:475px;width:169px;top:224.5px;text-align:center;font-weight:bold;font-size:12.5px;letter-spacing:0.1px">Primary</div>
<div class="a" style="left:324px;top:238px;width:321px;height:330px;background:#fff"></div>
<div class="a" style="left:324px;top:238px;width:320px;height:75px;background:#d5e8c7"></div>
<div class="a" style="left:324px;top:253px;width:321px;height:1px;background:#a9a9a9"></div>
<div class="t s" style="left:327px;top:240px;font-size:12px">Subscriber</div>
<div class="t s" style="left:476.5px;top:240px;font-size:12px">John Smith</div>
<div class="a" style="left:324px;top:268px;width:321px;height:1px;background:#a9a9a9"></div>
<div class="t s" style="left:327px;top:255px;font-size:12px">Subscriber ID</div>
<div class="t s" style="left:476.5px;top:255px;font-size:12px">352664588</div>
<div class="a" style="left:324px;top:283px;width:321px;height:1px;background:#a9a9a9"></div>
<div class="t s" style="left:327px;top:270px;font-size:12px">Rel'ship to Sub</div>
<div class="t s" style="left:476.5px;top:270px;font-size:12px">Self</div>
<div class="a" style="left:324px;top:298px;width:321px;height:1px;background:#a9a9a9"></div>
<div class="t s" style="left:327px;top:285px;font-size:12px">Patient ID</div>
<div class="a" style="left:324px;top:313px;width:321px;height:1px;background:#111"></div>
<div class="t s" style="left:327px;top:300px;font-size:12px">Pending</div>
<div class="a" style="left:324px;top:328px;width:321px;height:1px;background:#a9a9a9"></div>
<div class="t s" style="left:327px;top:315px;font-size:12px">Employer</div>
<div class="t s" style="left:476.5px;top:315px;font-size:12px">REI Distribution</div>
<div class="a" style="left:324px;top:343px;width:321px;height:1px;background:#a9a9a9"></div>
<div class="t s" style="left:327px;top:330px;font-size:12px">Carrier</div>
<div class="t s" style="left:476.5px;top:330px;font-size:12px">Metlife</div>
<div class="a" style="left:324px;top:358px;width:321px;height:1px;background:#a9a9a9"></div>
<div class="t s" style="left:327px;top:345px;font-size:12px">Group Name</div>
<div class="t s" style="left:476.5px;top:345px;font-size:12px">REI</div>
<div class="a" style="left:324px;top:373px;width:321px;height:1px;background:#a9a9a9"></div>
<div class="t s" style="left:327px;top:360px;font-size:12px">Group Number</div>
<div class="t s" style="left:476.5px;top:360px;font-size:12px">G189614</div>
<div class="a" style="left:324px;top:388px;width:321px;height:1px;background:#a9a9a9"></div>
<div class="t s" style="left:327px;top:375px;font-size:12px">Type</div>
<div class="t s" style="left:476.5px;top:375px;font-size:12px">Category Percentage</div>
<div class="a" style="left:324px;top:403px;width:321px;height:1px;background:#111"></div>
<div class="t s" style="left:327px;top:390px;font-size:12px">Fee Schedule</div>
<div class="a" style="left:324px;top:418px;width:321px;height:1px;background:#a9a9a9"></div>
<div class="t s" style="left:327px;top:405px;font-size:12px">Benefit Period</div>
<div class="t s" style="left:476.5px;top:405px;font-size:12px">Calendar Year</div>
<div class="a" style="left:324px;top:433px;width:321px;height:1px;background:#a9a9a9"></div>
<div class="t s" style="left:327px;top:420px;font-size:12px">Diagnostic %</div>
<div class="t s" style="left:476.5px;top:420px;font-size:12px">100%</div>
<div class="a" style="left:324px;top:448px;width:321px;height:1px;background:#a9a9a9"></div>
<div class="t s" style="left:327px;top:435px;font-size:12px">Preventive %</div>
<div class="t s" style="left:476.5px;top:435px;font-size:12px">100%</div>
<div class="a" style="left:324px;top:463px;width:321px;height:1px;background:#a9a9a9"></div>
<div class="t s" style="left:327px;top:450px;font-size:12px">Restorative %</div>
<div class="t s" style="left:476.5px;top:450px;font-size:12px">80%</div>
<div class="a" style="left:324px;top:478px;width:321px;height:1px;background:#a9a9a9"></div>
<div class="t s" style="left:327px;top:465px;font-size:12px">Endo %</div>
<div class="t s" style="left:476.5px;top:465px;font-size:12px">80%</div>
<div class="a" style="left:324px;top:493px;width:321px;height:1px;background:#a9a9a9"></div>
<div class="t s" style="left:327px;top:480px;font-size:12px">Oral Surgery %</div>
<div class="t s" style="left:476.5px;top:480px;font-size:12px">80%</div>
<div class="a" style="left:324px;top:508px;width:321px;height:1px;background:#a9a9a9"></div>
<div class="t s" style="left:327px;top:495px;font-size:12px">Crowns %</div>
<div class="t s" style="left:476.5px;top:495px;font-size:12px">50%</div>
<div class="a" style="left:324px;top:523px;width:321px;height:1px;background:#a9a9a9"></div>
<div class="t s" style="left:327px;top:510px;font-size:12px">Prosth %</div>
<div class="t s" style="left:476.5px;top:510px;font-size:12px">50%</div>
<div class="a" style="left:324px;top:538px;width:321px;height:1px;background:#a9a9a9"></div>
<div class="t s" style="left:327px;top:525px;font-size:12px">Perio %</div>
<div class="t s" style="left:476.5px;top:525px;font-size:12px">80%</div>
<div class="a" style="left:324px;top:553px;width:321px;height:1px;background:#a9a9a9"></div>
<div class="t s" style="left:327px;top:540px;font-size:12px">Ins Plan Note</div>
<div class="a" style="left:324px;top:568px;width:321px;height:1px;background:#8c8c8c"></div>
<div class="t s" style="left:327px;top:555px;font-size:12px">Subscriber Note</div>
<div class="a" style="left:474px;top:238px;width:1px;height:330px;background:#a9a9a9"></div>
<div class="a" style="left:644px;top:238px;width:1px;height:330px;background:#a9a9a9"></div>
<div class="a" style="left:985px;top:0px;width:18px;height:697px;background:linear-gradient(90deg,#e6e6e6,#f4f4f4 30%,#f0f0f0)"></div>
<div class="a" style="left:990px;top:6px;width:0;height:0;border-left:4px solid transparent;border-right:4px solid transparent;border-bottom:4px solid #333"></div>
<div class="a" style="left:986px;top:17px;width:15px;height:482px;border:1px solid #979797;border-radius:2px;background:linear-gradient(90deg,#f6f6f6 0%,#ececec 45%,#d8d8d8 55%,#cacaca 100%)"></div>
<div class="a" style="left:990px;top:254px;width:7px;height:7px;background:repeating-linear-gradient(#555 0,#555 1px,transparent 1px,transparent 3px)"></div>
<div class="a" style="left:990px;top:688px;width:0;height:0;border-left:4.5px solid transparent;border-right:4.5px solid transparent;border-top:4px solid #333"></div>
<div class="a" style="left:0px;top:697px;width:985px;height:17px;background:linear-gradient(#e8e8e8,#f4f4f4 30%,#f0f0f0)"></div>
<div class="a" style="left:4px;top:701px;width:0;height:0;border-top:4px solid transparent;border-bottom:4px solid transparent;border-right:4px solid #333"></div>
<div class="a" style="left:16px;top:698px;width:785px;height:15px;border:1px solid #979797;border-radius:2px;background:linear-gradient(#f6f6f6 0%,#ececec 45%,#d8d8d8 55%,#cacaca 100%)"></div>
<div class="a" style="left:404px;top:702px;width:8px;height:7px;background:repeating-linear-gradient(90deg,#444 0,#444 1.5px,transparent 1.5px,transparent 3px)"></div>
<div class="a" style="left:976px;top:701px;width:0;height:0;border-top:4px solid transparent;border-bottom:4px solid transparent;border-left:4px solid #333"></div>
<div class="a" style="left:985px;top:697px;width:18px;height:17px;background:#f0f0f0"></div>
<div class="a" style="left:997px;top:701px;width:2px;height:2px;background:#a0a0a0"></div>
<div class="a" style="left:997px;top:705px;width:2px;height:2px;background:#a0a0a0"></div>
<div class="a" style="left:993px;top:705px;width:2px;height:2px;background:#a0a0a0"></div>
<div class="a" style="left:997px;top:709px;width:2px;height:2px;background:#a0a0a0"></div>
<div class="a" style="left:993px;top:709px;width:2px;height:2px;background:#a0a0a0"></div>
<div class="a" style="left:989px;top:709px;width:2px;height:2px;background:#a0a0a0"></div>
<div class="a" style="left:0px;top:714px;width:1003px;height:1px;background:#a8c0e0"></div>
<div class="a" style="left:1002px;top:0px;width:1px;height:715px;background:#b4c6e6"></div>
</body></html>
